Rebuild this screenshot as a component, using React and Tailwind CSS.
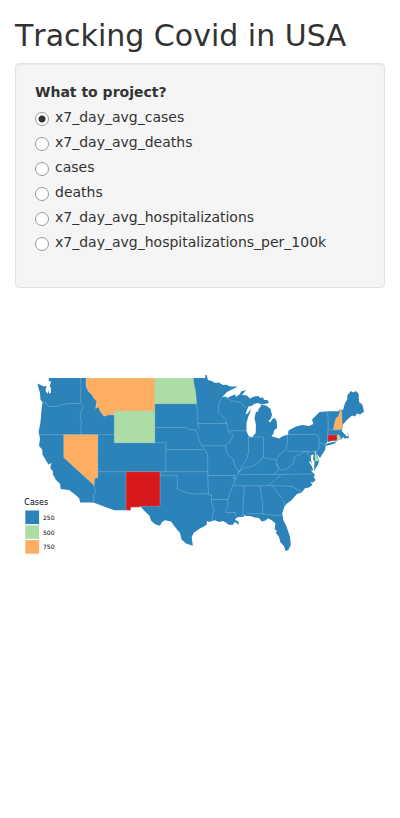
import { useState } from "react";

const METRICS = [
  "x7_day_avg_cases",
  "x7_day_avg_deaths",
  "cases",
  "deaths",
  "x7_day_avg_hospitalizations",
  "x7_day_avg_hospitalizations_per_100k",
];

const LEGEND = [
  { label: "250", color: "#2b83ba", y: 510.5 },
  { label: "500", color: "#abdda4", y: 525.3 },
  { label: "750", color: "#fdae61", y: 540.1 },
];

const LAND =
  "M49 378L205.3 378L205.3 375L206.7 375L208 380L211.7 381L215 383L219 382.5L223.3 385.3L226 384.5L230 386.5L238 386.6L231 390L227 392L222 397.3L225 396.5L228 397.7L231 396L235 394.5L236 396.8L240 394L241 391.5L246 390L242 395L247 395.5L250 398.5L254 396.5L258.5 396L260 398L263 397.3L264 400L267.5 400L269 403L262 404.5L258 403L254 404L251.5 406L248.5 406.5L246.5 411L245.5 414.7L248 413L251 408.7L250 413L248.5 416L246.5 423L246.5 431L248.5 436L252 437.3L255.7 433L255.9 424.7L254.5 418L256 411.5L258 412L258.5 409L260.5 407L261 404.8L266 405.5L270.5 408.7L272 414.7L271 418.5L268.5 421L270 422.5L272.5 419L275 418L276.8 421.5L277 428L274 430.5L273.5 433.5L271.5 436.3L275 437.3L279 438.5L283 436L288 434.5L288.5 430.5L296 426.5L302 425L309 426L313.3 424L312 419.5L319.5 412L328 411.2L338 411.2L341 409L343 410L345 403L347 400L347.5 395L351 391L353 392.5L356 391L358.7 394L359 402L362.3 404.5L364 411.7L360 414.5L357 413.5L355 416.5L352 415.5L347 420L343.3 424L342.5 428L341.6 431L345 434.5L347.5 437L348 434.5L346.5 433.5L348 433.5L349 438L344.5 438.5L343.4 437L341.3 439.3L337.5 440.5L327.7 441.7L325.7 443.5L325.3 449.5L321.5 455.5L320 458L317.7 455L316.5 454L319.3 460.7L318.2 464L315.3 469L314 471L314.5 462L313 459L313.6 454.5L311.3 455L310.8 459L312 464L310 461L309 462L312 466.5L313.3 470.5L311 470.5L315 475L313.7 477L315.5 480L313 482.5L310.5 482L312.5 485L309 487.5L305 488.3L302 492.3L296.7 494.3L291.7 500L286.7 503.7L284.3 507L282.3 513.3L283.3 520L286.7 527L290 536.7L290.8 545L288.3 550L285.5 551L284 546L280.5 542.5L279 537L275.7 532.5L277 531L274.7 529L275.5 523.5L271.7 520.3L268 518.3L265.5 520.5L261.7 521.5L259 518L255 517.5L250 516L245.5 516L245 514.5L243.5 517L239.5 516.8L236 518L235 520L238 521L239 525L235 522L232.5 525L228 524.5L226 522.5L222.5 521L219.5 522L214.5 520.2L209 522L207 521L206.5 525L200 528.5L193.7 532.8L191.7 537L192.8 545.7L186 543.5L181.5 539.5L180 533L175 527L171 521.5L165 520.2L162 522L160 525.7L155 524.3L151 520.5L149.5 515.7L145 511.5L140.7 506.7L130.7 507.3L130.7 510.3L114.3 510.3L93.3 502.5L80.3 502.6L79 498L75 494.5L69 490L60.7 489L60 483.7L56 480L52.7 474L53 471.5L50.2 468L51.5 463L48.5 464.5L46.3 461L42.5 454.5L42.2 449.5L39 446L40 438.5L38.6 432L40.5 422L41.3 411.5L42.5 402L40.5 400L40 393L37.3 383.5L44 386.5L46.5 386L45.5 390.5L47.5 394L48.5 390L49 393.5L50.8 393L51 388L49.5 386L51.2 382L48.5 380.5Z";

const BORDERS =
  "M80.7 378V402.5M42 402L46 403L48.5 406.5L55 406.5L65 404L70 403.5H81L83.5 406L80 414.5L81.3 421L80.7 434.7M39 434.7H114.3M97.7 435V477M97.7 471.7H207.7M114.3 442.7H165.7V471.7M154.7 403.7V442.7M154.7 427.5H186L190 429.5L196 430L197.5 435L199.5 441L202 446L206 451L207.7 456V475.5L208.5 494M165.7 449.5H203M207.5 475.5H235L233.5 478.5H236M160 471.7V475.3H177.3V489L186 492.5L195 494L205 493.5L211.5 495.5M211.5 499.5H227.5M211.5 495V502L213.7 509L212 520M196.3 403.5V407L197.7 411V423.5L199 430M197.7 423.5H227M202 445.7H225.5M222 397.3L218.5 404.5V412L225 418.5L227 425L228.5 432L233.5 435.5L229.5 442L225.5 446L227 454L233 459L235 466L239 472L235.5 479L231 490L227.5 500L228 505L225.5 512.5H235L236 516M224.5 397.5L233 401L241 402.5L246 408M229 430.7H247M248.5 437V453L246.5 459L242 466.5L239 472L238 472.5M249 437H263.5V457L267 459H273L276 460L280.5 454L286 450L287.5 443V434.5M263.5 457L259 462L253 466L245 467.5L239 472M276 460L277.5 466L281.5 470L286.5 469L293 464L294.5 457L301 454L305 451.5L310 456L313 461M276.5 463.5L278.5 470L273.5 474.5M241 474.5L271 474.5L312 474M233.5 485.7H281L292 486.5L302 492M281 475L268 485.7M244.5 485.7L243 505V516M260 485.7L262.5 503L263 514L281 516L283 513M247.5 513.5H263M272 485.7L278 493L284.5 502L285 507M287.5 451.3H317L320 447L318.5 443L319.5 438L316.5 434.5H287.5M319 442.5L325 445M327.7 411.3L328.3 424L327.7 435V442M327.7 430H340M307 451.5L310 453M93.5 485L95.5 491L93.3 497L94 502";

const STATES = [
  {
    name: "Montana",
    color: "#fdae61",
    d: "M86 378H154.7V411.3H114.3V415L109 414.7L104 416.3L100.5 412L98.5 407L95.5 408.5L96.5 401L94 398.5L91.5 394.5L88.5 391.5L86 386.5Z",
  },
  { name: "Wyoming", color: "#abdda4", d: "M114.3 411.3H154.7V442.7H114.3Z" },
  { name: "North Dakota", color: "#abdda4", d: "M154.7 378H193.3L194 384L195.5 391L196.7 403.7H154.7Z" },
  { name: "Nevada", color: "#fdae61", d: "M63.7 434.7H97.7V477.7L94.5 478.5L94.3 485.5L63.7 457.5Z" },
  { name: "New Mexico", color: "#d7191c", d: "M126 471.7H160V506.3H139.7L140.3 507.2H130.7V510.3H126Z" },
  {
    name: "New Hampshire",
    color: "#fdae61",
    d: "M340.3 409.3L341.6 409.5L342 421.7L343.3 427L341 429.5L333.3 429.5L334.5 423.3L336 418L338.5 416.5Z",
  },
  { name: "Connecticut", color: "#d7191c", d: "M327.7 435H337.2V440.2L331 440.8L328 442Z" },
  { name: "Rhode Island", color: "#abdda4", d: "M337.3 435H339.5L340.5 438L341.3 439L337.3 440.5Z" },
  { name: "Delaware", color: "#abdda4", d: "M315 451.5L316 451.5L316 455L319.4 461H315Z" },
];

function CasesMap() {
  return (
    <svg className="block h-auto w-full" viewBox="15 308 370 400" role="img" aria-label="Cases by state">
      <path d={LAND} fill="#2b83ba" />
      <path d="M324 446L327 443.5L331 442.5L337 441.3L335 443L337.3 442.5L330 445Z" fill="#2b83ba" />
      <path d={BORDERS} fill="none" stroke="#fff" strokeOpacity="0.27" strokeWidth="0.8" strokeLinejoin="round" />
      {STATES.map((s) => (
        <path key={s.name} d={s.d} fill={s.color} stroke="#fff" strokeOpacity="0.3" strokeWidth="0.6" />
      ))}
      <g className="font-['DejaVu_Sans',sans-serif]" fill="#000">
        <text x="24.3" y="505" fontSize="8">Cases</text>
        {LEGEND.map((item) => (
          <g key={item.label}>
            <rect x="25.3" y={item.y} width="13.8" height="13.6" fill={item.color} />
            <text x="43" y={item.y + 9.3} fontSize="6">{item.label}</text>
          </g>
        ))}
      </g>
    </svg>
  );
}

export default function App() {
  const [metric, setMetric] = useState(METRICS[0]);

  return (
    <main className="bg-white px-[15px] pt-5 font-['DejaVu_Sans',sans-serif] text-sm leading-[18px] text-[#333]">
      <h2 className="mb-3 text-[30px] leading-[31px] font-normal [font-kerning:none]">Tracking Covid in USA</h2>
      <form className="mb-5 rounded border border-[#e3e3e3] bg-[#f5f5f5] p-[19px] shadow-[inset_0_1px_1px_rgba(0,0,0,0.05)]">
        <fieldset className="mb-[17px]">
          <legend className="mb-[7px] font-bold">What to project?</legend>
          <div className="flex flex-col gap-[7px]">
            {METRICS.map((name) => (
              <label key={name} className="flex gap-1.5">
                <input
                  type="radio"
                  name="metric"
                  value={name}
                  checked={metric === name}
                  onChange={() => setMetric(name)}
                  className="mt-1 size-3.5 shrink-0 appearance-none rounded-full border border-[#999] bg-white checked:bg-[radial-gradient(circle,#333_3px,white_4px)]"
                />
                <span>{name}</span>
              </label>
            ))}
          </div>
        </fieldset>
      </form>
      <CasesMap />
    </main>
  );
}
